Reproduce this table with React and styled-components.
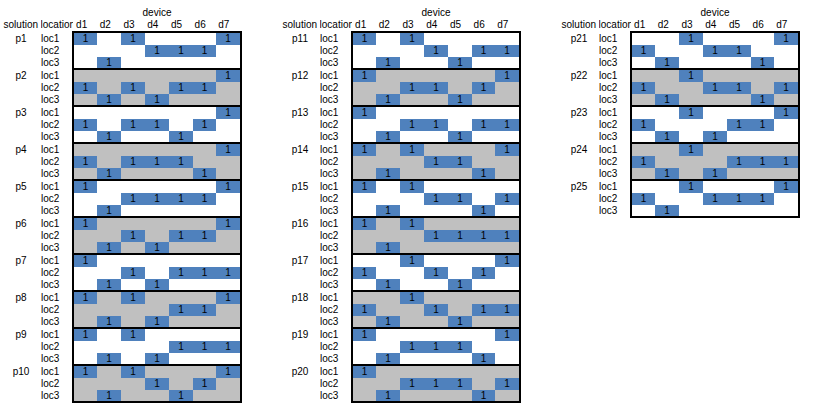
import React from "react";
import styled, { createGlobalStyle } from "styled-components";

const GlobalStyle = createGlobalStyle`
  html, body {
    margin: 0;
    padding: 0;
    background: #ffffff;
  }
  body {
    font-family: "Liberation Sans", Arial, sans-serif;
    font-size: 10px;
    color: #000000;
  }
`;

const COLS = "23px 24px 24px 24px 24px 23px 24px";
const ROW_HEIGHTS = [12, 12, 11];
const DEVICES = ["d1", "d2", "d3", "d4", "d5", "d6", "d7"];

// for each solution: devices (1-based) placed at loc1, loc2, loc3
const solutions = [
  [[1, 3, 7], [4, 5, 6], [2]],
  [[7], [1, 3, 5, 6], [2, 4]],
  [[7], [1, 3, 4, 6], [2, 5]],
  [[7], [1, 3, 4, 5], [2, 6]],
  [[1, 7], [3, 4, 5, 6], [2]],
  [[1, 7], [3, 5, 6], [2, 4]],
  [[1], [3, 5, 6, 7], [2, 4]],
  [[1, 3, 7], [5, 6], [2, 4]],
  [[1, 3], [5, 6, 7], [2, 4]],
  [[1, 3, 7], [4, 6], [2, 5]],
  [[1, 3], [4, 6, 7], [2, 5]],
  [[1, 7], [3, 4, 6], [2, 5]],
  [[1], [3, 4, 6, 7], [2, 5]],
  [[1, 3, 7], [4, 5], [2, 6]],
  [[1, 3], [4, 5, 7], [2, 6]],
  [[1, 3], [4, 5, 6, 7], [2]],
  [[3, 7], [1, 4, 6], [2, 5]],
  [[3], [1, 4, 6, 7], [2, 5]],
  [[1, 7], [3, 4, 5], [2, 6]],
  [[1], [3, 4, 5, 7], [2, 6]],
  [[3, 7], [1, 4, 5], [2, 6]],
  [[3], [1, 4, 5, 7], [2, 6]],
  [[3, 7], [1, 5, 6], [2, 4]],
  [[3], [1, 5, 6, 7], [2, 4]],
  [[3, 7], [1, 4, 5, 6], [2]],
].map((locs, i) => ({ name: `p${i + 1}`, locs }));

const panels = [
  solutions.slice(0, 10),
  solutions.slice(10, 20),
  solutions.slice(20, 25),
];

const Page = styled.div`
  display: flex;
  align-items: flex-start;
  gap: 40px;
  padding: 7px 0 0 3px;
`;

const Panel = styled.div`
  display: flex;
  flex-direction: column;
  width: 239px;
`;

const Title = styled.div`
  margin-left: 69px;
  width: 170px;
  height: 12px;
  line-height: 12px;
  text-align: center;
`;

const HeaderRow = styled.div`
  display: flex;
  height: 12px;
  line-height: 12px;
  white-space: nowrap;
`;

const SolHead = styled.div`
  width: 38px;
  padding-right: 2px;
  box-sizing: border-box;
  text-align: center;
`;

const LocHead = styled.div`
  width: 36px;
`;

const Clipped = styled.span`
  display: inline-block;
  width: 32px;
  overflow: hidden;
  vertical-align: top;
`;

const DevHead = styled.div`
  width: 24px;
`;

const Group = styled.div`
  display: flex;
`;

const Labels = styled.div`
  display: flex;
  width: 69px;
  padding-top: 2px;
`;

const SolName = styled.div`
  width: 38px;
  padding-right: 2px;
  box-sizing: border-box;
  height: 12px;
  line-height: 12px;
  text-align: center;
`;

const LocList = styled.div`
  display: flex;
  flex-direction: column;
  width: 31px;
`;

const LocName = styled.div`
  height: ${(p) => p.$h}px;
  line-height: ${(p) => p.$h}px;
`;

const Block = styled.div`
  width: 166px;
  border: 2px solid #000000;
  border-bottom-width: ${(p) => (p.$last ? 2 : 0)}px;
  background: ${(p) => (p.$shade ? "#c0c0c0" : "#ffffff")};
`;

const CellRow = styled.div`
  display: grid;
  grid-template-columns: ${COLS};
  height: ${(p) => p.$h}px;
`;

const Cell = styled.div`
  background: ${(p) => (p.$on ? "#4f81bd" : "transparent")};
  line-height: ${(p) => p.$h}px;
  text-align: center;
`;

const SolutionGroup = ({ solution, shade, last }) => (
  <Group>
    <Labels>
      <SolName>{solution.name}</SolName>
      <LocList>
        {ROW_HEIGHTS.map((h, i) => (
          <LocName key={i} $h={h}>
            loc{i + 1}
          </LocName>
        ))}
      </LocList>
    </Labels>
    <Block $shade={shade} $last={last}>
      {solution.locs.map((devs, r) => (
        <CellRow key={r} $h={ROW_HEIGHTS[r]}>
          {DEVICES.map((d, c) => {
            const on = devs.includes(c + 1);
            return (
              <Cell key={d} $on={on} $h={ROW_HEIGHTS[r]}>
                {on ? "1" : ""}
              </Cell>
            );
          })}
        </CellRow>
      ))}
    </Block>
  </Group>
);

const App = () => (
  <>
    <GlobalStyle />
    <Page>
      {panels.map((list, pi) => (
        <Panel key={pi}>
          <Title>device</Title>
          <HeaderRow>
            <SolHead>solution</SolHead>
            <LocHead>
              <Clipped>location</Clipped>
            </LocHead>
            {DEVICES.map((d) => (
              <DevHead key={d}>{d}</DevHead>
            ))}
          </HeaderRow>
          {list.map((s, i) => (
            <SolutionGroup
              key={s.name}
              solution={s}
              shade={i % 2 === 1}
              last={i === list.length - 1}
            />
          ))}
        </Panel>
      ))}
    </Page>
  </>
);

export default App;
